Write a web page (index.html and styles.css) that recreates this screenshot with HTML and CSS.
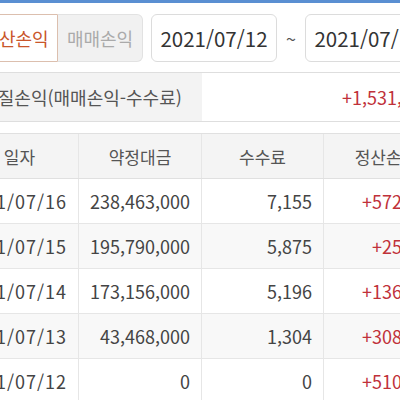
FILE: index.html
```html
<!DOCTYPE html>
<html lang="ko">
<head>
<meta charset="utf-8">
<link rel="stylesheet" href="styles.css">
</head>
<body>
<div class="topbar"></div>
<div class="page">
  <div class="filters">
    <div class="seg">
      <div class="seg-btn active">정산손익</div>
      <div class="seg-btn">매매손익</div>
    </div>
    <div class="date">2021/07/12</div>
    <div class="tilde">~</div>
    <div class="date">2021/07/16</div>
  </div>
  <div class="summary">
    <div class="sum-label">실질손익(매매손익-수수료)</div>
    <div class="sum-value">+1,531,020</div>
  </div>
  <div class="table">
    <div class="row head">
      <div class="c c1">일자</div>
      <div class="c c2">약정대금</div>
      <div class="c c3">수수료</div>
      <div class="c c4">정산손익</div>
    </div>
    <div class="row">
      <div class="c c1 day">2021/07/16</div>
      <div class="c c2 num">238,463,000</div>
      <div class="c c3 num">7,155</div>
      <div class="c c4 num red">+572,310</div>
    </div>
    <div class="row alt">
      <div class="c c1 day">2021/07/15</div>
      <div class="c c2 num">195,790,000</div>
      <div class="c c3 num">5,875</div>
      <div class="c c4 num red">+25,640</div>
    </div>
    <div class="row">
      <div class="c c1 day">2021/07/14</div>
      <div class="c c2 num">173,156,000</div>
      <div class="c c3 num">5,196</div>
      <div class="c c4 num red">+136,480</div>
    </div>
    <div class="row alt">
      <div class="c c1 day">2021/07/13</div>
      <div class="c c2 num">43,468,000</div>
      <div class="c c3 num">1,304</div>
      <div class="c c4 num red">+308,120</div>
    </div>
    <div class="row">
      <div class="c c1 day">2021/07/12</div>
      <div class="c c2 num">0</div>
      <div class="c c3 num">0</div>
      <div class="c c4 num red">+510,000</div>
    </div>
  </div>
</div>
</body>
</html>
```
FILE: styles.css
```css
html, body {
  margin: 0;
  padding: 0;
  background: #fff;
  overflow: hidden;
}
body {
  font-family: "Noto Sans CJK KR", sans-serif;
  color: #444;
  width: 400px;
  height: 400px;
}
.topbar {
  height: 3px;
  background: #5a8fd2;
}
.page {
  margin-left: -39px;
  width: 520px;
}
.filters {
  display: flex;
  align-items: center;
  margin-top: 11px;
  margin-left: 12px;
  height: 48px;
}
.seg {
  display: flex;
  height: 48px;
}
.seg-btn {
  width: 85px;
  box-sizing: border-box;
  display: flex;
  align-items: center;
  justify-content: center;
  font-size: 18px;
  color: #aaa;
  background: #f1f1f1;
  border: 1px solid #e2e2e2;
  border-left: none;
  border-radius: 0 6px 6px 0;
}
.seg-btn.active {
  color: #c9562b;
  background: #fff;
  border: 1px solid #dcbfae;
  border-radius: 6px 0 0 6px;
}
.date {
  margin-left: 8px;
  width: 126px;
  height: 48px;
  box-sizing: border-box;
  border: 1px solid #dcdcdc;
  border-radius: 6px;
  display: flex;
  align-items: center;
  justify-content: center;
  font-size: 20.5px;
  color: #333;
}
.date + .tilde + .date {
  margin-left: 0;
}
.tilde {
  width: 28px;
  text-align: center;
  font-size: 18px;
  color: #555;
}
.summary {
  display: flex;
  margin-top: 10px;
  height: 48px;
  border-top: 1px solid #dedede;
  border-bottom: 1px solid #dedede;
}
.sum-label {
  width: 241px;
  background: #f3f3f3;
  display: flex;
  align-items: center;
  justify-content: center;
  font-size: 18px;
  color: #555;
}
.sum-value {
  flex: 1;
  display: flex;
  align-items: center;
  justify-content: flex-end;
  padding-right: 49px;
  font-size: 18px;
  color: #c0313a;
}
.table {
  margin-top: 11px;
  border-top: 1px solid #e0e0e0;
}
.row {
  display: flex;
  height: 45px;
  border-bottom: 1px solid #e6e6e6;
  box-sizing: border-box;
}
.row.head {
  background: #f4f4f4;
  border-bottom: 1px solid #e0e0e0;
}
.row.alt {
  background: #f8f8f8;
}
.c {
  display: flex;
  align-items: center;
  justify-content: center;
  box-sizing: border-box;
  font-size: 18px;
  color: #444;
  border-right: 1px solid #e6e6e6;
}
.row.head .c {
  font-size: 17px;
  color: #555;
}
.c1 { width: 118px; }
.c2 { width: 123px; }
.c3 { width: 122px; }
.c4 { width: 125px; }
.day {
  justify-content: flex-end;
  padding-right: 11px;
  letter-spacing: 1px;
}
.num {
  justify-content: flex-end;
  padding-right: 11px;
}
.red {
  color: #c0313a;
}
```
